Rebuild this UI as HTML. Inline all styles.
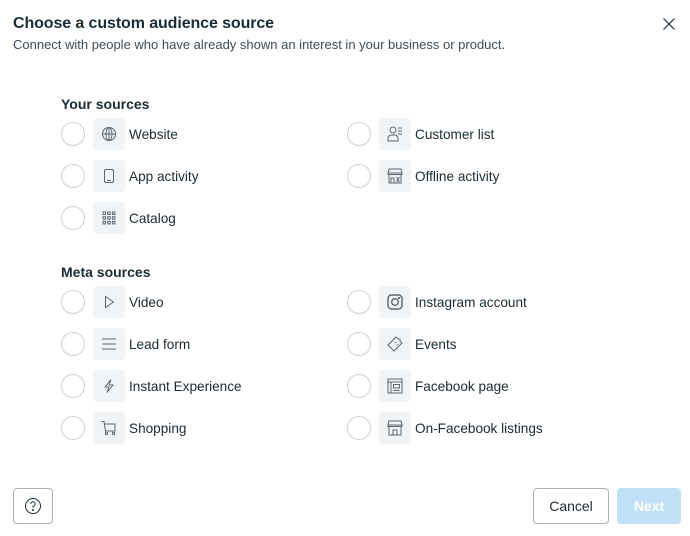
<!DOCTYPE html>
<html><head><style>
body{margin:0;width:690px;height:536px;background:#fff;font-family:"Liberation Sans",sans-serif;color:#1c2b33;position:relative;overflow:hidden}
.a{position:absolute}
.t{left:13px;top:15px;font-size:16px;font-weight:bold;letter-spacing:-0.1px}
.s{left:13px;top:37px;font-size:13px;color:#3e4c57}
.h{font-size:14px;font-weight:bold}
.r{width:22px;height:22px;border:1px solid #ccd0d5;border-radius:50%}
.i{width:32px;height:32px;border-radius:4px;background:#f1f4f7;display:flex;align-items:center;justify-content:center}
.l{font-size:13.6px;color:#1c2b33}
.btn{border:1px solid #a9b0b8;border-radius:4px;box-sizing:border-box;display:flex;align-items:center;justify-content:center;font-size:14px}
svg{fill:none;stroke:#5a6670;stroke-width:1}
</style></head><body>
<div class="a t">Choose a custom audience source</div>
<div class="a s">Connect with people who have already shown an interest in your business or product.</div>
<svg class="a" style="left:663px;top:18px" width="12" height="12"><path d="M0.5 0.5L11.5 11.5M11.5 0.5L0.5 11.5" stroke="#1c2b33" stroke-width="1.2"/></svg>
<div class="a h" style="left:61px;top:96px">Your sources</div>
<div class="a h" style="left:61px;top:264px">Meta sources</div>

<div class="a r" style="left:61px;top:122px"></div><div class="a i" style="left:93px;top:118px"><svg width="16" height="16"><circle cx="8" cy="8" r="6.5"/><ellipse cx="8" cy="8" rx="3" ry="6.5"/><path d="M1.5 8H14.5M8 1.5V14.5"/></svg></div><div class="a l" style="left:129px;top:127px">Website</div>
<div class="a r" style="left:61px;top:164px"></div><div class="a i" style="left:93px;top:160px"><svg width="16" height="16"><rect x="3.5" y="1.5" width="9" height="13" rx="1.5"/><path d="M6 12.5H10"/></svg></div><div class="a l" style="left:129px;top:169px">App activity</div>
<div class="a r" style="left:61px;top:206px"></div><div class="a i" style="left:93px;top:202px"><svg width="16" height="16"><g><rect x="2" y="2" width="2.5" height="2.5"/><rect x="6.7" y="2" width="2.5" height="2.5"/><rect x="11.4" y="2" width="2.5" height="2.5"/><rect x="2" y="6.7" width="2.5" height="2.5"/><rect x="6.7" y="6.7" width="2.5" height="2.5"/><rect x="11.4" y="6.7" width="2.5" height="2.5"/><rect x="2" y="11.4" width="2.5" height="2.5"/><rect x="6.7" y="11.4" width="2.5" height="2.5"/><rect x="11.4" y="11.4" width="2.5" height="2.5"/></g></svg></div><div class="a l" style="left:129px;top:211px">Catalog</div>

<div class="a r" style="left:347px;top:122px"></div><div class="a i" style="left:379px;top:118px"><svg width="18" height="18"><circle cx="7" cy="5" r="3"/><path d="M2 16V13.5A3.5 3.5 0 0 1 5.5 10H8.5A3.5 3.5 0 0 1 12 13.5V16Z"/><path d="M12 3H16M12 6H16M12 9H16"/></svg></div><div class="a l" style="left:415px;top:127px">Customer list</div>
<div class="a r" style="left:347px;top:164px"></div><div class="a i" style="left:379px;top:160px"><svg width="18" height="18"><path d="M3 2H15L16 6H2Z M2 6H16V7.5H2Z M3 7.5V16H15V7.5"/><path d="M5 16V11H8V16M10.5 10L13.5 15M13.5 10L10.5 15"/></svg></div><div class="a l" style="left:415px;top:169px">Offline activity</div>

<div class="a r" style="left:61px;top:290px"></div><div class="a i" style="left:93px;top:286px"><svg width="16" height="16"><path d="M4.5 2.5L12.5 8L4.5 13.5Z"/></svg></div><div class="a l" style="left:129px;top:295px">Video</div>
<div class="a r" style="left:61px;top:332px"></div><div class="a i" style="left:93px;top:328px"><svg width="18" height="18"><path d="M2 4H16M2 9H16M2 14H16"/></svg></div><div class="a l" style="left:129px;top:337px">Lead form</div>
<div class="a r" style="left:61px;top:374px"></div><div class="a i" style="left:93px;top:370px"><svg width="16" height="16"><path d="M10 1.5L4 9H8L6 14.5L12 7H8Z"/></svg></div><div class="a l" style="left:129px;top:379px">Instant Experience</div>
<div class="a r" style="left:61px;top:416px"></div><div class="a i" style="left:93px;top:412px"><svg width="18" height="18"><path d="M1.5 2.5H4L5.5 12H15V5H4.5"/><circle cx="6.5" cy="14.5" r="1.2"/><circle cx="13.5" cy="14.5" r="1.2"/></svg></div><div class="a l" style="left:129px;top:421px">Shopping</div>

<div class="a r" style="left:347px;top:290px"></div><div class="a i" style="left:379px;top:286px"><svg width="18" height="18"><rect x="2" y="2" width="14" height="14" rx="3.5" stroke-width="1.4"/><circle cx="9" cy="9" r="3.3" stroke-width="1.4"/><circle cx="13" cy="5" r=".6" fill="#5a6670"/></svg></div><div class="a l" style="left:415px;top:295px">Instagram account</div>
<div class="a r" style="left:347px;top:332px"></div><div class="a i" style="left:379px;top:328px"><svg width="18" height="18"><path d="M2 10L10 2L12 4L14 4L14 6L16 8L8 16Z M9 7L10 8M11 9L12 10"/></svg></div><div class="a l" style="left:415px;top:337px">Events</div>
<div class="a r" style="left:347px;top:374px"></div><div class="a i" style="left:379px;top:370px"><svg width="18" height="18"><rect x="2" y="2" width="14" height="14"/><path d="M2 5H16M5 5V16M7.5 7.5H13.5V11H7.5ZM7.5 13.5H13.5"/></svg></div><div class="a l" style="left:415px;top:379px">Facebook page</div>
<div class="a r" style="left:347px;top:416px"></div><div class="a i" style="left:379px;top:412px"><svg width="18" height="18"><path d="M3 2H15L16 6H2Z M2 6H16V7.5H2Z M3 7.5V16H15V7.5"/><path d="M7 16V11H11V16"/></svg></div><div class="a l" style="left:415px;top:421px">On-Facebook listings</div>

<div class="a btn" style="left:13px;top:488px;width:40px;height:36px"><svg width="18" height="18"><circle cx="9" cy="9" r="7.5" stroke="#1c2b33"/><path d="M6.8 7A2.2 2.2 0 1 1 9 9.2V10.8" stroke="#1c2b33"/><circle cx="9" cy="13" r=".5" fill="#1c2b33" stroke="#1c2b33"/></svg></div>
<div class="a btn" style="left:533px;top:488px;width:76px;height:36px;color:#1c2b33">Cancel</div>
<div class="a btn" style="left:617px;top:488px;width:64px;height:36px;border:none;background:#bfe0f7;color:#fff;font-weight:bold">Next</div>
</body></html>
